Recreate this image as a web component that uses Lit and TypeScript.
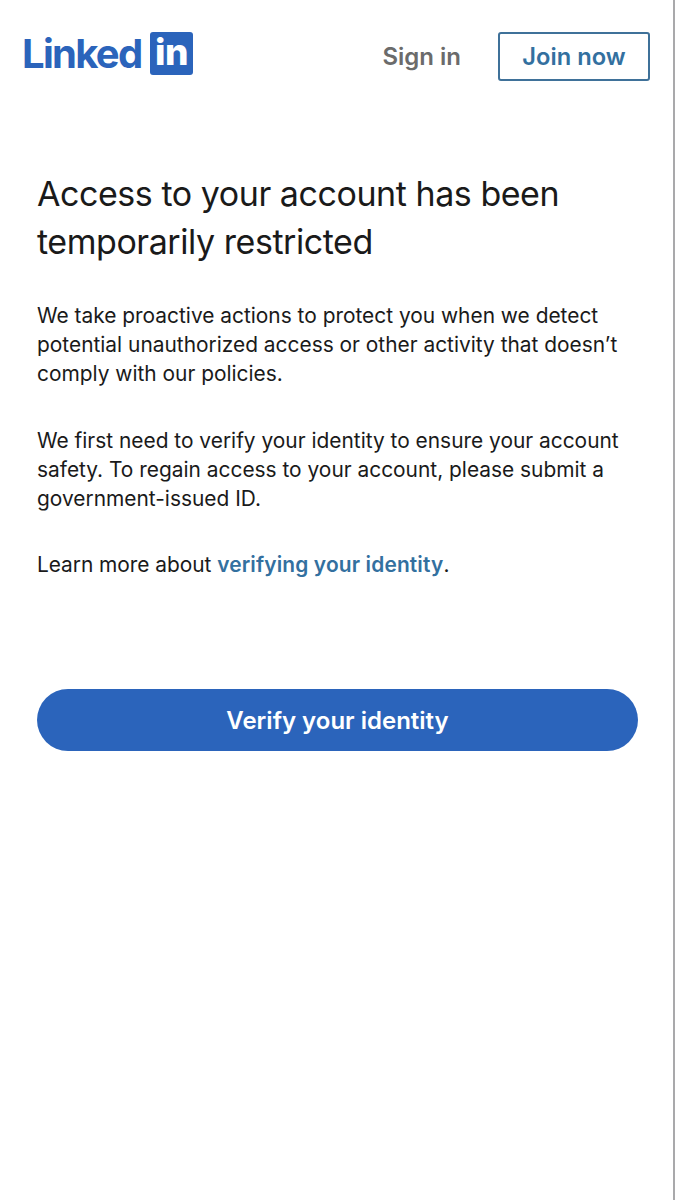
import { LitElement, html, css } from "lit";
import { customElement } from "lit/decorators.js";

@customElement("app-root")
export class AppRoot extends LitElement {
  static styles = css`
    :host {
      display: block;
      height: 1200px;
      background: #fff;
      font-family: Inter, "Liberation Sans", sans-serif;
      color: #1a1a1a;
      border-right: 2px solid #a9a9ab;
      box-sizing: border-box;
      width: 675px;
      overflow: hidden;
    }
    header {
      display: flex;
      align-items: flex-start;
      padding: 32px 23px 0 24px;
    }
    .logo {
      display: flex;
      align-items: flex-start;
      color: #2b64bb;
      font-weight: 700;
    }
    .word {
      font-size: 40px;
      line-height: 44px;
      letter-spacing: -1.7px;
      margin-left: -2px;
      width: 128px;
    }
    .tile {
      width: 43px;
      height: 43px;
      background: #2b64bb;
      border-radius: 3px;
      color: #fff;
      font-size: 37px;
      line-height: 40px;
      font-weight: 800;
      text-align: center;
      letter-spacing: -0.5px;
    }
    .signin {
      margin-left: auto;
      margin-right: 37px;
      font-size: 24px;
      font-weight: 600;
      line-height: 50px;
      color: #6b6b6b;
    }
    .join {
      box-sizing: border-box;
      width: 152px;
      height: 49px;
      border: 2px solid #3f7199;
      border-radius: 3px;
      font-size: 23.7px;
      font-weight: 600;
      line-height: 46px;
      text-align: center;
      color: #33709f;
    }
    main {
      padding: 88px 35px 0 37px;
    }
    h1 {
      margin: 0 0 35px;
      font-size: 34px;
      line-height: 48px;
      font-weight: 400;
      letter-spacing: -0.45px;
      color: #1a1a1a;
    }
    p {
      margin: 0 0 37.5px;
      font-size: 20.9px;
      line-height: 29px;
    }
    .last {
      letter-spacing: -0.04px;
    }
    a {
      color: #33709f;
      font-weight: 600;
      letter-spacing: 0.15px;
    }
    .cta {
      margin-top: 110px;
      height: 62px;
      border-radius: 31px;
      background: #2b64bb;
      color: #fff;
      font-size: 24px;
      font-weight: 600;
      line-height: 63px;
      text-align: center;
    }
  `;

  render() {
    return html`
      <header>
        <div class="logo">
          <span class="word">Linked</span>
          <span class="tile">in</span>
        </div>
        <span class="signin">Sign in</span>
        <span class="join">Join now</span>
      </header>
      <main>
        <h1>Access to your account has been temporarily restricted</h1>
        <p>We take proactive actions to protect you when we detect potential unauthorized access or other activity that doesn’t comply with our policies.</p>
        <p>We first need to verify your identity to ensure your account safety. To regain access to your account, please submit a government-issued ID.</p>
        <p class="last">Learn more about <a>verifying your identity</a>.</p>
        <div class="cta">Verify your identity</div>
      </main>
    `;
  }
}
